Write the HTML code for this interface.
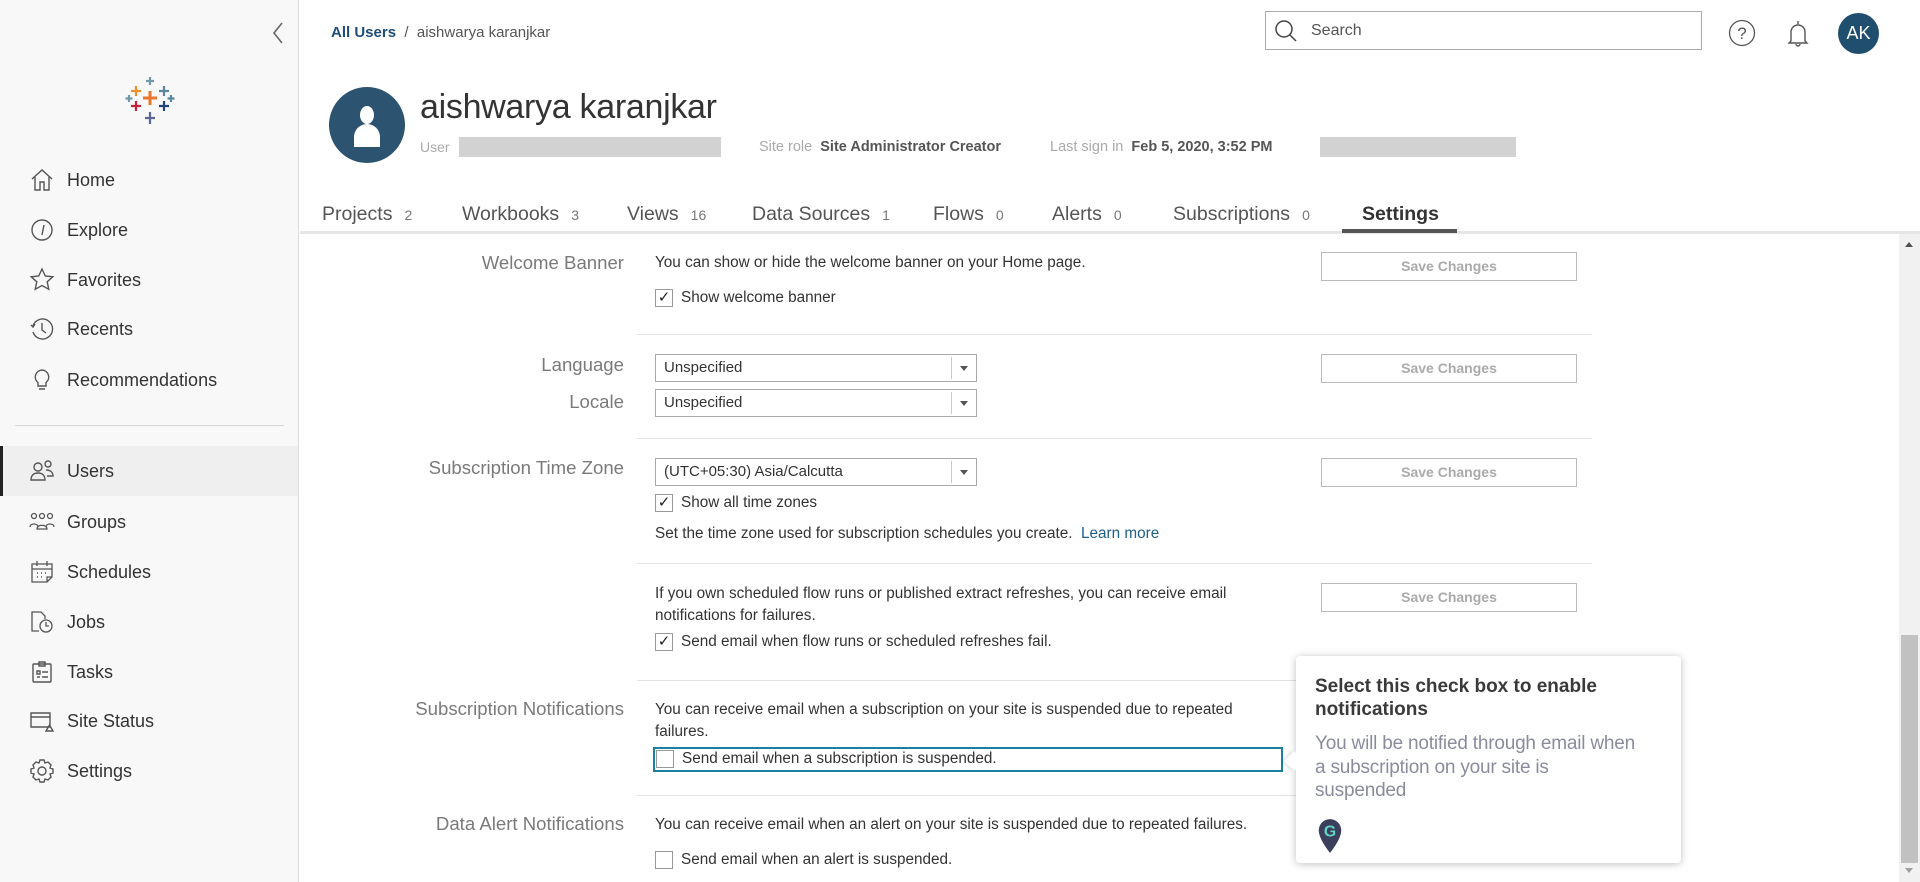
<!DOCTYPE html>
<html><head><meta charset="utf-8"><style>
*{margin:0;padding:0;box-sizing:border-box}
body{width:1920px;height:882px;overflow:hidden;background:#fff;font-family:"Liberation Sans",sans-serif;color:#333;position:relative}
.a{position:absolute;white-space:nowrap}
#side{position:absolute;left:0;top:0;width:299px;height:882px;background:#f8f8f8;border-right:1px solid #ddd}
.nav{position:absolute;left:67px;font-size:18px;color:#333;line-height:24px}
.ic{position:absolute;left:29px;width:26px;height:26px}
.lbl{position:absolute;right:1296px;font-size:18.6px;color:#7a7a7a;line-height:22px;text-align:right;white-space:nowrap}
.t{position:absolute;left:655px;font-size:15.3px;color:#333;line-height:20px;white-space:nowrap}
.btn{position:absolute;left:1321px;width:256px;height:29px;border:1px solid #bbb;color:#aaa;font-size:14px;font-weight:bold;text-align:center;line-height:27px;background:#fff}
.sel{position:absolute;left:655px;width:322px;height:28px;border:1px solid #aaa;font-size:15px;line-height:26px;padding-left:8px;color:#333}
.sel:after{content:"";position:absolute;right:0;top:2px;width:24px;height:22px;border-left:1px solid #ccc}
.sel b{position:absolute;right:8px;top:11px;border-left:4px solid transparent;border-right:4px solid transparent;border-top:5px solid #555}
.cb{position:absolute;left:655px;width:18px;height:18px;border:1px solid #999;background:#fff;font-size:15px;line-height:16px;text-align:center;color:#222}
.div{position:absolute;left:637px;width:955px;height:1px;background:#e2e2e2}
.tab{position:absolute;top:202px;font-size:19.5px;color:#555;line-height:24px}
.tab small{font-size:14px;color:#777;margin-left:12px}
</style></head><body>
<div id="side">
<svg class="a" style="left:271px;top:21px" width="14" height="24"><path d="M11 2L3 12L11 22" fill="none" stroke="#666" stroke-width="1.6"/></svg>
<svg class="a" style="left:124px;top:75px" width="52" height="52" viewBox="0 0 52 52">
<g stroke-width="2.2" fill="none">
<path d="M26 16v14M19 23h14" stroke="#e8762d" stroke-width="3"/>
<path d="M12 11v10M7 16h10" stroke="#eb912b"/>
<path d="M40 11v10M35 16h10" stroke="#5b879b"/>
<path d="M26 2v8M22 6h8" stroke="#7099a6"/>
<path d="M5 20v7M1.5 23.5h7" stroke="#7099a6"/>
<path d="M47 20v7M43.5 23.5h7" stroke="#59879b"/>
<path d="M12 26v10M7 31h10" stroke="#c72037"/>
<path d="M40 26v10M35 31h10" stroke="#1f457e"/>
<path d="M26 37v12M21 43h10" stroke="#5c6692"/>
</g></svg>
<svg class="ic" style="top:167px" viewBox="0 0 26 26" fill="none" stroke="#555" stroke-width="1.4"><path d="M3 12L13 3L23 12M6 10v13h5v-8h4v8h5V10"/></svg>
<svg class="ic" style="top:217px" viewBox="0 0 26 26" fill="none" stroke="#555" stroke-width="1.4"><circle cx="13" cy="13" r="10"/><path d="M15 8l-2 10"/></svg>
<svg class="ic" style="top:267px" viewBox="0 0 26 26" fill="none" stroke="#555" stroke-width="1.4"><path d="M13 2l3.3 7 7.5.8-5.6 5 1.6 7.5L13 18.5 6.2 22.3l1.6-7.5-5.6-5 7.5-.8z"/></svg>
<svg class="ic" style="top:316px" viewBox="0 0 26 26" fill="none" stroke="#555" stroke-width="1.4"><path d="M4 10a10 10 0 1 1 0 6M2 9l2 2 2-3M13 7v7l4 3"/></svg>
<svg class="ic" style="top:367px" viewBox="0 0 26 26" fill="none" stroke="#555" stroke-width="1.4"><path d="M13 3a7 7 0 0 0-4 12.5V19h8v-3.5A7 7 0 0 0 13 3zM10 22h6"/></svg>
<div class="nav" style="top:168px">Home</div>
<div class="nav" style="top:218px">Explore</div>
<div class="nav" style="top:268px">Favorites</div>
<div class="nav" style="top:317px">Recents</div>
<div class="nav" style="top:368px">Recommendations</div>
<div class="a" style="left:15px;top:425px;width:269px;height:1px;background:#d8d8d8"></div>
<div class="a" style="left:0;top:446px;width:298px;height:50px;background:#efefef"></div>
<div class="a" style="left:0;top:446px;width:3px;height:50px;background:#222"></div>
<svg class="ic" style="top:458px" viewBox="0 0 26 26" fill="none" stroke="#555" stroke-width="1.4"><circle cx="9" cy="9" r="4"/><circle cx="19" cy="6" r="3"/><path d="M2 22c0-5 3-7 7-7s7 2 7 7zM17 12c4 0 7 2 7 6h-6"/></svg>
<svg class="ic" style="top:509px" viewBox="0 0 26 26" fill="none" stroke="#555" stroke-width="1.3"><circle cx="5" cy="7" r="2.5"/><circle cx="13" cy="7" r="2.5"/><circle cx="21" cy="7" r="2.5"/><path d="M1 18c0-4 8-4 8 0M8 20c0-5 10-5 10 0zM17 18c0-4 8-4 8 0"/></svg>
<svg class="ic" style="top:559px" viewBox="0 0 26 26" fill="none" stroke="#555" stroke-width="1.3"><path d="M3 5h20v13l-5 5H3zM3 10h20M8 2v5M18 2v5M18 23v-5h5"/><path d="M8 14h1M12 14h1M16 14h1M8 18h1M12 18h1" stroke-width="1.5"/></svg>
<svg class="ic" style="top:609px" viewBox="0 0 26 26" fill="none" stroke="#555" stroke-width="1.3"><path d="M10 22H3V3h9l4 4v3"/><circle cx="17" cy="17" r="6"/><path d="M17 13v4h3"/></svg>
<svg class="ic" style="top:659px" viewBox="0 0 26 26" fill="none" stroke="#555" stroke-width="1.4"><rect x="4" y="5" width="18" height="18" rx="1"/><path d="M10 3h6v4h-6zM8 12h3v3H8zM13 13h6M8 18h3M13 18h6"/></svg>
<svg class="ic" style="top:708px" viewBox="0 0 26 26" fill="none" stroke="#555" stroke-width="1.4"><path d="M2 5h19v14H2zM2 9h19M17 23l3.5-6 3.5 6z"/></svg>
<svg class="ic" style="top:758px" viewBox="0 0 26 26" fill="none" stroke="#555" stroke-width="1.4"><circle cx="13" cy="13" r="4"/><path d="M11 2h4l1 3 3-1 3 3-1 3 3 1v4l-3 1 1 3-3 3-3-1-1 3h-4l-1-3-3 1-3-3 1-3-3-1v-4l3-1-1-3 3-3 3 1z"/></svg>
<div class="nav" style="top:459px">Users</div>
<div class="nav" style="top:510px">Groups</div>
<div class="nav" style="top:560px">Schedules</div>
<div class="nav" style="top:610px">Jobs</div>
<div class="nav" style="top:660px">Tasks</div>
<div class="nav" style="top:709px">Site Status</div>
<div class="nav" style="top:759px">Settings</div>
</div>

<div class="a" style="left:331px;top:23px;font-size:15px;line-height:20px"><span style="color:#1f4e79;font-weight:bold">All Users</span><span style="color:#555"> &nbsp;/ &nbsp;aishwarya karanjkar</span></div>
<div class="a" style="left:1265px;top:11px;width:437px;height:39px;border:1px solid #aaa"></div>
<svg class="a" style="left:1274px;top:19px" width="24" height="24" fill="none" stroke="#444" stroke-width="1.5"><circle cx="10" cy="10" r="8"/><path d="M16 16l6 6"/></svg>
<div class="a" style="left:1311px;top:21px;font-size:16px;color:#555;line-height:20px">Search</div>
<svg class="a" style="left:1728px;top:19px" width="28" height="28" fill="none" stroke="#555" stroke-width="1.3"><circle cx="14" cy="14" r="12.5"/><text x="14" y="20" font-size="17" text-anchor="middle" fill="#555" stroke="none" font-family="Liberation Sans">?</text></svg>
<svg class="a" style="left:1786px;top:19px" width="24" height="30" fill="none" stroke="#555" stroke-width="1.4"><path d="M12 2v3M5 22V13a7 7 0 0 1 14 0v9l2 2H3zM10 25a2 2 0 0 0 4 0"/></svg>
<div class="a" style="left:1838px;top:13px;width:41px;height:41px;border-radius:50%;background:#1f4e6e;color:#fff;font-size:18px;text-align:center;line-height:41px">AK</div>

<div class="a" style="left:329px;top:87px;width:76px;height:76px;border-radius:50%;background:#2c5370"></div>
<svg class="a" style="left:351px;top:103px" width="32" height="46"><ellipse cx="16" cy="12" rx="7" ry="9" fill="#fff"/><path d="M3 44V34a13 13 0 0 1 26 0v10z" fill="#fff"/></svg>
<div class="a" style="left:420px;top:86px;font-size:34px;color:#333;line-height:42px;letter-spacing:-0.3px">aishwarya karanjkar</div>
<div class="a" style="left:420px;top:137px;font-size:14px;color:#aaa;line-height:20px">User</div>
<div class="a" style="left:459px;top:137px;width:262px;height:20px;background:#d2d2d2"></div>
<div class="a" style="left:759px;top:137px;font-size:14.5px;line-height:20px"><span style="color:#aaa">Site role</span>&nbsp; <span style="color:#555;font-weight:bold">Site Administrator Creator</span></div>
<div class="a" style="left:1050px;top:137px;font-size:14.5px;line-height:20px"><span style="color:#aaa">Last sign in</span>&nbsp; <span style="color:#555;font-weight:bold">Feb 5, 2020, 3:52 PM</span></div>
<div class="a" style="left:1320px;top:137px;width:196px;height:20px;background:#d2d2d2"></div>

<div class="tab" style="left:322px">Projects<small>2</small></div>
<div class="tab" style="left:462px">Workbooks<small>3</small></div>
<div class="tab" style="left:627px">Views<small>16</small></div>
<div class="tab" style="left:752px">Data Sources<small>1</small></div>
<div class="tab" style="left:933px">Flows<small>0</small></div>
<div class="tab" style="left:1052px">Alerts<small>0</small></div>
<div class="tab" style="left:1173px">Subscriptions<small>0</small></div>
<div class="tab" style="left:1362px;color:#333;font-weight:bold">Settings</div>
<div class="a" style="left:300px;top:231px;width:1620px;height:3px;background:#e6e6e6"></div>
<div class="a" style="left:1342px;top:229px;width:115px;height:4px;background:#555"></div>

<div class="a" style="left:1899px;top:234px;width:21px;height:648px;background:#f1f1f1"></div>
<div class="a" style="left:1901px;top:635px;width:17px;height:228px;background:#c1c1c1"></div>
<div class="a" style="left:1905px;top:242px;border-left:4px solid transparent;border-right:4px solid transparent;border-bottom:5px solid #505050"></div>
<div class="a" style="left:1905px;top:868px;border-left:4px solid transparent;border-right:4px solid transparent;border-top:5px solid #a0a0a0"></div>

<div class="lbl" style="top:252px">Welcome Banner</div>
<div class="t" style="top:253px">You can show or hide the welcome banner on your Home page.</div>
<div class="cb" style="top:289px">✓</div><div class="t" style="left:681px;top:288px">Show welcome banner</div>
<div class="btn" style="top:252px">Save Changes</div>
<div class="div" style="top:334px"></div>

<div class="lbl" style="top:354px">Language</div>
<div class="sel" style="top:354px">Unspecified<b></b></div>
<div class="lbl" style="top:391px">Locale</div>
<div class="sel" style="top:389px">Unspecified<b></b></div>
<div class="btn" style="top:354px">Save Changes</div>
<div class="div" style="top:438px"></div>

<div class="lbl" style="top:457px">Subscription Time Zone</div>
<div class="sel" style="top:458px">(UTC+05:30) Asia/Calcutta<b></b></div>
<div class="cb" style="top:494px">✓</div><div class="t" style="left:681px;top:493px">Show all time zones</div>
<div class="t" style="top:524px">Set the time zone used for subscription schedules you create. &nbsp;<span style="color:#1f5f8b">Learn more</span></div>
<div class="btn" style="top:458px">Save Changes</div>
<div class="div" style="top:563px"></div>

<div class="t" style="top:583px;line-height:22px">If you own scheduled flow runs or published extract refreshes, you can receive email<br>notifications for failures.</div>
<div class="cb" style="top:633px">✓</div><div class="t" style="left:681px;top:632px">Send email when flow runs or scheduled refreshes fail.</div>
<div class="btn" style="top:583px">Save Changes</div>
<div class="div" style="top:680px"></div>

<div class="lbl" style="top:698px">Subscription Notifications</div>
<div class="t" style="top:699px;line-height:22px">You can receive email when a subscription on your site is suspended due to repeated<br>failures.</div>
<div class="a" style="left:653px;top:747px;width:630px;height:25px;border:2px solid #1a7fa0"></div>
<div class="cb" style="top:750px;left:656px"></div><div class="t" style="left:682px;top:749px">Send email when a subscription is suspended.</div>
<div class="div" style="top:795px"></div>

<div class="lbl" style="top:813px">Data Alert Notifications</div>
<div class="t" style="top:815px">You can receive email when an alert on your site is suspended due to repeated failures.</div>
<div class="cb" style="top:851px"></div><div class="t" style="left:681px;top:850px">Send email when an alert is suspended.</div>

<div class="a" style="left:1296px;top:656px;width:385px;height:207px;background:#fff;border-radius:4px;box-shadow:0 1px 8px rgba(0,0,0,.25)"></div>
<div class="a" style="left:1287px;top:754px;width:14px;height:14px;background:#fff;transform:rotate(45deg);box-shadow:-2px 2px 3px rgba(0,0,0,.1)"></div>
<div class="a" style="left:1315px;top:675px;font-size:19px;font-weight:bold;color:#3a3a3a;line-height:23px">Select this check box to enable<br>notifications</div>
<div class="a" style="left:1315px;top:732px;font-size:19px;color:#8a8c9e;line-height:23.5px;letter-spacing:-0.2px">You will be notified through email when<br>a subscription on your site is<br>suspended</div>
<svg class="a" style="left:1316px;top:818px" width="28" height="36" viewBox="0 0 24 32"><path d="M12 1a10 10 0 0 1 10 10c0 8-10 20-10 20S2 19 2 11A10 10 0 0 1 12 1z" fill="#3b3f5c"/><text x="12" y="16.5" font-size="14" text-anchor="middle" fill="#5fd6c4" font-family="Liberation Sans" font-weight="bold">G</text></svg>
</body></html>
